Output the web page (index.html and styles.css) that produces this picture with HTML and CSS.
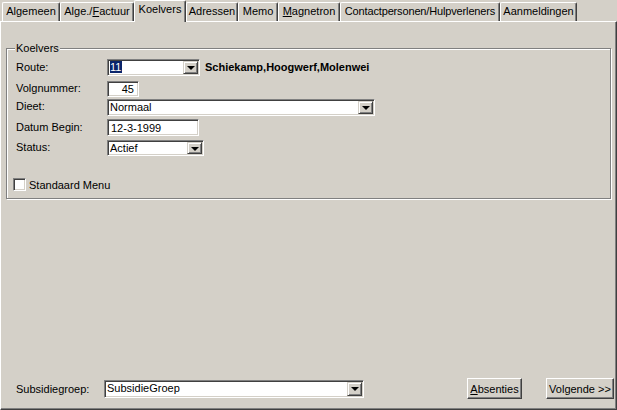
FILE: index.html
```html
<!DOCTYPE html>
<html>
<head>
<meta charset="utf-8">
<link rel="stylesheet" href="styles.css">
</head>
<body>
<div class="window">
  <div class="tabs">
    <div class="tab t1">Algemeen</div>
    <div class="tab t2">Alge./<u>F</u>actuur</div>
    <div class="tab t3 active">Koelvers</div>
    <div class="tab t4">Adressen</div>
    <div class="tab t5">Memo</div>
    <div class="tab t6"><u>M</u>agnetron</div>
    <div class="tab t7">Contactpersonen/Hulpverleners</div>
    <div class="tab t8">Aanmeldingen</div>
  </div>
  <div class="panel">
    <fieldset class="group">
      <legend class="legend">Koelvers</legend>
      <div class="row r1">
        <div class="lbl">Route:</div>
        <div class="combo w-route"><span class="val"><span class="sel">11</span></span><span class="drop"><span class="arrow"></span></span></div>
        <div class="route-name">Schiekamp,Hoogwerf,Molenwei</div>
      </div>
      <div class="row r2">
        <div class="lbl">Volgnummer:</div>
        <div class="edit w-volg num">45</div>
      </div>
      <div class="row r3">
        <div class="lbl">Dieet:</div>
        <div class="combo w-dieet"><span class="val">Normaal</span><span class="drop"><span class="arrow"></span></span></div>
      </div>
      <div class="row r4">
        <div class="lbl">Datum Begin:</div>
        <div class="edit w-datum">12-3-1999</div>
      </div>
      <div class="row r5">
        <div class="lbl">Status:</div>
        <div class="combo w-status"><span class="val">Actief</span><span class="drop"><span class="arrow"></span></span></div>
      </div>
      <div class="check-row">
        <span class="checkbox"></span>
        <span class="check-lbl">Standaard Menu</span>
      </div>
    </fieldset>
    <div class="spacer"></div>
    <div class="bottom">
      <div class="lbl-sub">Subsidiegroep:</div>
      <div class="combo w-sub"><span class="val">SubsidieGroep</span><span class="drop"><span class="arrow"></span></span></div>
      <div class="buttons">
        <div class="btn w-abs"><u>A</u>bsenties</div>
        <div class="btn w-next">Volgende &gt;&gt;</div>
      </div>
    </div>
  </div>
</div>
</body>
</html>
```
FILE: styles.css
```css
* { box-sizing: border-box; }
html, body {
  margin: 0;
  padding: 0;
  background: #d4d0c8;
}
body {
  width: 617px;
  height: 410px;
  overflow: hidden;
  font-family: "Liberation Sans", Arial, sans-serif;
  font-size: 11px;
  color: #000;
}
.window {
  display: flex;
  flex-direction: column;
  width: 617px;
  height: 410px;
}
.tabs {
  display: flex;
  align-items: flex-end;
  height: 21px;
  padding-left: 2px;
  flex: none;
}
.tab {
  height: 19px;
  line-height: 16px;
  text-align: center;
  white-space: nowrap;
  background: #d4d0c8;
  border-top: 1px solid #fff;
  border-left: 1px solid #fff;
  border-right: 1px solid #404040;
  box-shadow: inset -1px 0 0 #808080;
  border-top-left-radius: 2px;
  border-top-right-radius: 2px;
}
.tab.active {
  height: 22px;
  margin-bottom: -1px;
  line-height: 16px;
  position: relative;
  z-index: 2;
}
.t1 { width: 58px; }
.t2 { width: 74px; }
.t3 { width: 52px; }
.t4 { width: 52px; }
.t5 { width: 40px; }
.t6 { width: 62px; }
.t7 { width: 160px; letter-spacing: -0.15px; }
.t8 { width: 77px; }
.tab u, .btn u { text-decoration: underline; }

.panel {
  flex: 1;
  display: flex;
  flex-direction: column;
  border-top: 1px solid #fff;
  border-left: 1px solid #fff;
  border-right: 1px solid #404040;
  border-bottom: 1px solid #404040;
  box-shadow: inset -1px -1px 0 #808080;
  padding: 0 2px 10px 0;
}
.group {
  margin: 20px 3px 0 5px;
  padding: 0 0 7px 9px;
  border: 1px solid #808080;
  box-shadow: inset 1px 1px 0 #fff, 1px 1px 0 #fff;
  min-width: 0;
}
.legend {
  padding: 0 1px;
  margin-left: -1px;
  line-height: 13px;
  background: #d4d0c8;
}
.row {
  display: flex;
  align-items: center;
  height: 17px;
}
.r1 { margin-top: 4px; }
.r2 { margin-top: 5px; height: 16px; }
.r3 { margin-top: 2px; }
.r4 { margin-top: 3px; }
.r5 { margin-top: 4px; height: 16px; }
.lbl {
  width: 91px;
  flex: none;
  white-space: nowrap;
}
.r1 .lbl { margin-top: -1px; }
.r2 .lbl { margin-top: -3px; }
.r3 .lbl { margin-top: -4px; }
.r4 .lbl { margin-top: -1px; }
.r5 .lbl { margin-top: -3px; }

.combo, .edit {
  height: 100%;
  display: flex;
  align-items: center;
  background: #fff;
  border: 1px solid;
  border-color: #808080 #fff #fff #808080;
  box-shadow: inset 1px 1px 0 #404040, inset -1px -1px 0 #d4d0c8;
  padding: 1px 1px 1px 2px;
  flex: none;
  white-space: nowrap;
}
.combo .val {
  flex: 1;
  line-height: 13px;
  overflow: hidden;
}
.sel {
  background: #0a246a;
  color: #fff;
  padding: 0 1px;
  margin-left: -1px;
}
.drop {
  width: 15px;
  height: 100%;
  flex: none;
  display: flex;
  align-items: center;
  justify-content: center;
  background: #d4d0c8;
  border: 1px solid;
  border-color: #d4d0c8 #404040 #404040 #d4d0c8;
  box-shadow: inset 1px 1px 0 #fff, inset -1px -1px 0 #808080;
}
.arrow {
  width: 0;
  height: 0;
  border-left: 4px solid transparent;
  border-right: 4px solid transparent;
  border-top: 4px solid #000;
  margin-left: 1px;
  margin-top: 1px;
}
.edit { padding-left: 3px; }
.edit.num { justify-content: flex-end; padding-right: 4px; }
.w-route { width: 93px; }
.w-volg { width: 32px; }
.w-dieet { width: 268px; }
.w-datum { width: 92px; }
.w-status { width: 97px; }
.w-sub { width: 260px; height: 18px; }
.route-name {
  margin-left: 5px;
  font-weight: bold;
  white-space: nowrap;
  margin-top: -2px;
}

.check-row {
  display: flex;
  align-items: center;
  margin-top: 22px;
  margin-left: -3px;
  height: 13px;
}
.checkbox {
  width: 13px;
  height: 13px;
  background: #fff;
  border: 1px solid;
  border-color: #808080 #fff #fff #808080;
  box-shadow: inset 1px 1px 0 #404040, inset -1px -1px 0 #d4d0c8;
  flex: none;
}
.check-lbl { margin-left: 3px; }

.spacer { flex: 1; }
.bottom {
  display: flex;
  align-items: center;
  height: 21px;
}
.lbl-sub {
  width: 88px;
  margin-left: 15px;
  flex: none;
}
.buttons {
  margin-left: auto;
  display: flex;
  gap: 24px;
  height: 21px;
}
.btn {
  height: 21px;
  display: flex;
  align-items: center;
  justify-content: center;
  border: 1px solid;
  border-color: #fff #404040 #404040 #fff;
  box-shadow: inset -1px -1px 0 #808080;
  background: #d4d0c8;
  white-space: nowrap;
}
.w-abs { width: 55px; }
.w-next { width: 68px; }
```
